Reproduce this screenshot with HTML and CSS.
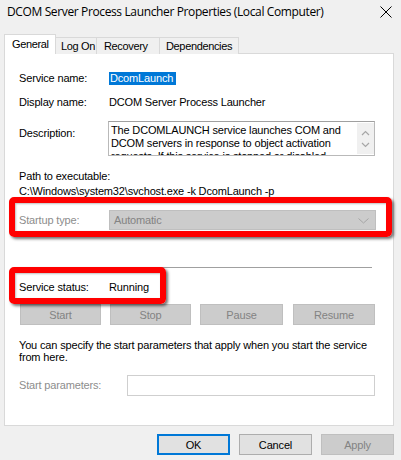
FILE: index.html
```html
<!DOCTYPE html>
<html>
<head>
<meta charset="utf-8">
<link rel="stylesheet" href="styles.css">
</head>
<body>
<div class="window">
  <div class="titlebar">
    <span class="title">DCOM Server Process Launcher Properties (Local Computer)</span>
    <svg class="close" width="12" height="12" viewBox="0 0 12 12"><path d="M0.5 0.5 L11.5 11.5 M11.5 0.5 L0.5 11.5" stroke="#000" stroke-width="1" fill="none"/></svg>
  </div>
  <div class="tabs">
    <div class="tab active">General</div>
    <div class="tab">Log On</div>
    <div class="tab">Recovery</div>
    <div class="tab">Dependencies</div>
  </div>
  <div class="panel">
    <div class="row r-name"><span class="label">Service name:</span><span class="sel">DcomLaunch</span></div>
    <div class="row r-display"><span class="label">Display name:</span><span class="value">DCOM Server Process Launcher</span></div>
    <div class="row r-desc">
      <span class="label">Description:</span>
      <div class="desc">
        <div class="desc-text">The DCOMLAUNCH service launches COM and DCOM servers in response to object activation requests. If this service is stopped or disabled,</div>
        <div class="scroll">
          <svg width="9" height="6" viewBox="0 0 9 6"><path d="M1 5 L4.5 1.5 L8 5" stroke="#a6a6a6" stroke-width="1.2" fill="none"/></svg>
          <svg width="9" height="6" viewBox="0 0 9 6"><path d="M1 1 L4.5 4.5 L8 1" stroke="#a6a6a6" stroke-width="1.2" fill="none"/></svg>
        </div>
      </div>
    </div>
    <div class="path">
      <div>Path to executable:</div>
      <div>C:\Windows\system32\svchost.exe -k DcomLaunch -p</div>
    </div>
    <div class="row r-startup">
      <span class="label dis">Startup type:</span>
      <div class="combo"><span>Automatic</span><svg width="11" height="6" viewBox="0 0 11 6"><path d="M0.5 0.5 L5.5 5 L10.5 0.5" stroke="#a6a6a6" stroke-width="1" fill="none"/></svg></div>
    </div>
    <div class="sep"></div>
    <div class="row r-status"><span class="label">Service status:</span><span class="value">Running</span></div>
    <div class="btnrow">
      <button class="btn dis">Start</button>
      <button class="btn dis">Stop</button>
      <button class="btn dis">Pause</button>
      <button class="btn dis">Resume</button>
    </div>
    <p class="hint">You can specify the start parameters that apply when you start the service from here.</p>
    <div class="row r-params"><span class="label dis">Start parameters:</span><div class="input"></div></div>
    <div class="mark mark1"></div>
    <div class="mark mark2"></div>
  </div>
  <div class="footer">
    <button class="btn fbtn ok">OK</button>
    <button class="btn fbtn">Cancel</button>
    <button class="btn fbtn dis">Apply</button>
  </div>
</div>
</body>
</html>
```

FILE: styles.css
```css
* { box-sizing: border-box; }
html, body { margin: 0; padding: 0; }
body {
  width: 401px;
  height: 460px;
  background: #f0f0f0;
  font-family: "Liberation Sans", Arial, sans-serif;
  font-size: 11px;
  letter-spacing: -0.16px;
  color: #000;
  overflow: hidden;
}
.window { width: 401px; height: 460px; display: flex; flex-direction: column; }

.titlebar {
  height: 30px;
  display: flex;
  align-items: flex-start;
  justify-content: space-between;
  padding: 3px 9px 0 7px;
}
.title {
  font-family: "Open Sans", "Noto Sans", sans-serif;
  font-size: 12px;
  line-height: 17px;
  letter-spacing: -0.37px;
}
.close { margin-top: 3px; }

.tabs {
  display: flex;
  align-items: flex-end;
  padding-left: 4px;
  margin-top: 4px;
  height: 20px;
  position: relative;
  z-index: 2;
}
.tab {
  height: 17px;
  line-height: 16px;
  padding: 0 5px;
  border: 1px solid #d9d9d9;
  border-bottom: none;
  border-left: none;
  background: #f0f0f0;
  white-space: nowrap;
  flex: none;
  letter-spacing: -0.35px;
}
.tab:nth-child(2) { width: 41px; padding: 0 0 0 5px; }
.tab:nth-child(3) { width: 63px; padding: 0 0 0 7px; }
.tab:nth-child(4) { width: 79px; padding: 0 0 0 6px; }
.tab.active {
  width: 52px;
  height: 20px;
  background: #fff;
  border-left: 1px solid #d9d9d9;
  line-height: 18px;
  padding: 0 0 0 7px;
}

.panel {
  position: relative;
  margin-left: 4px;
  width: 390px;
  height: 373px;
  margin-top: -1px;
  background: #fff;
  border: 1px solid #d9d9d9;
  padding: 18px 0 0 14px;
}

.row { display: flex; align-items: center; }
.label { width: 90px; flex: none; line-height: 13px; }
.label.dis, .dis { color: #8d8d8d; }
.value { line-height: 13px; }
.sel {
  background: #0078d7;
  color: #fff;
  line-height: 13px;
  height: 13px;
  padding: 0 3px 0 1px;
}
.r-name { height: 13px; }
.r-display { height: 13px; margin-top: 11px; }
.r-desc { margin-top: 12px; align-items: flex-start; }
.r-desc .label { padding-top: 6px; }
.desc {
  margin-left: -1px;
  width: 267px;
  height: 35px;
  border: 1px solid #b9b9b9;
  border-top-color: #a0a0a0;
  display: flex;
  overflow: hidden;
}
.desc-text {
  flex: 1;
  padding: 2px 0 0 2px;
  line-height: 13px;
  height: 33px;
  overflow: hidden;
}
.scroll {
  width: 17px;
  flex: none;
  background: #f0f0f0;
  display: flex;
  flex-direction: column;
  align-items: center;
  justify-content: space-between;
  padding: 7px 0 6px;
  margin: 1px 0;
}
.path { margin-top: 13px; line-height: 15px; }

.r-startup { margin-top: 11px; height: 20px; }
.combo {
  width: 267px;
  height: 20px;
  background: #cccccc;
  border: 1px solid #bfbfbf;
  color: #838383;
  display: flex;
  align-items: center;
  justify-content: space-between;
  padding: 0 6px 0 4px;
}
.combo svg { margin-top: 1px; }

.sep {
  margin-top: 37px;
  width: 353px;
  height: 1px;
  background: #a0a0a0;
}
.r-status { margin-top: 13px; height: 13px; }

.btnrow { display: flex; margin-top: 10px; margin-left: 1px; }
.btn {
  font-family: "Liberation Sans", Arial, sans-serif;
  font-size: 11px;
  letter-spacing: -0.16px;
  height: 21px;
  border: 1px solid #adadad;
  background: #e1e1e1;
  color: #000;
  padding: 0;
  margin: 0;
}
.btn.dis { background: #cccccc; border-color: #bfbfbf; color: #838383; }
.btnrow .btn { width: 81px; }
.btnrow .btn:nth-child(2) { margin-left: 9px; }
.btnrow .btn:nth-child(3) { margin-left: 9px; width: 83px; }
.btnrow .btn:nth-child(4) { margin-left: 10px; width: 82px; }

.hint {
  margin: 14px 0 0;
  width: 360px;
  line-height: 12px;
}
.r-params { margin-top: 12px; height: 21px; }
.r-params .label { width: 108px; }
.input {
  width: 248px;
  height: 21px;
  border: 1px solid #cfcfcf;
  background: #fff;
}

.mark {
  position: absolute;
  border: 6px solid #ff0000;
  border-radius: 5px;
  box-shadow: 2px 2px 3px rgba(0,0,0,0.55), inset 1px 1px 2px rgba(0,0,0,0.25);
}
.mark1 { left: 4px; top: 143px; width: 383px; height: 40px; }
.mark2 { left: 4px; top: 213px; width: 157px; height: 37px; }

.footer {
  display: flex;
  justify-content: flex-end;
  gap: 9px;
  padding: 8px 7px 0 0;
}
.fbtn { width: 73px; height: 21px; }
.ok { border: 2px solid #0078d7; }
```
